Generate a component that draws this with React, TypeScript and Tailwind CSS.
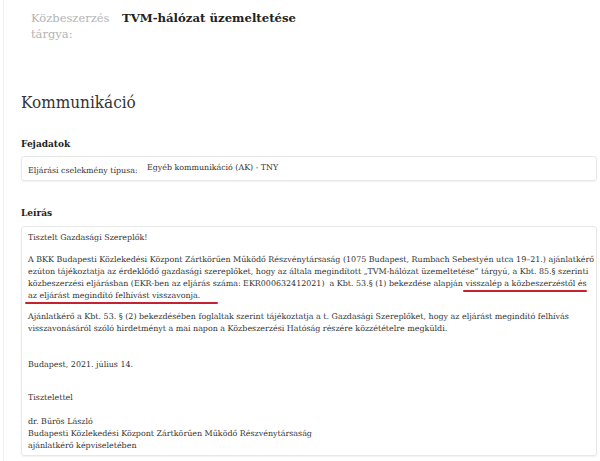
import React from 'react';

const serif = "font-['DejaVu_Serif','Liberation_Serif',serif]";

// hand-drawn red marker line under a phrase
const Mark: React.FC<{ children: React.ReactNode; extra?: string }> = ({ children, extra = 'left-[-2px] right-[0px]' }) => (
  <span className="relative">
    {children}
    <span className={`absolute bottom-[-4px] h-[2.5px] rounded-full bg-[#c42230] ${extra}`} />
  </span>
);

const App: React.FC = () => {
  return (
    <div className={`w-[600px] h-[461px] bg-white overflow-hidden ${serif}`}>
      <div className="ml-[3px] h-full border-l border-[#f1f1f1] pl-[17px] pr-[3px]">
        {/* subject */}
        <div className="flex pt-[10px] pl-[10px]">
          <div className="w-[91px] text-[11.5px] leading-[16px] text-[#b4b4b4]">
            Közbeszerzés
            <br />
            tárgya:
          </div>
          <div className="text-[11.7px] leading-[16px] font-bold text-[#222]">TVM-hálózat üzemeltetése</div>
        </div>

        <h1 className="mt-[48px] text-[17px] leading-[24px] text-[#333] font-['DejaVu_Serif_Condensed','DejaVu_Serif',serif]">
          Kommunikáció
        </h1>

        <h2 className="mt-[24px] text-[9px] leading-[12px] font-bold text-[#222]">Fejadatok</h2>
        <div className="mt-[6px] h-[25px] rounded-[3px] border border-[#e8e8e8] shadow-[0_1px_2px_rgba(0,0,0,0.06)] flex items-center px-[6px] text-[7.9px] text-[#333]">
          <span className="w-[119px] pt-[5px]">Eljárási cselekmény típusa:</span>
          <span className="pb-[1px]">Egyéb kommunikáció (AK) - TNY</span>
        </div>

        <h2 className="mt-[26px] text-[9px] leading-[12px] font-bold text-[#222]">Leírás</h2>
        <div className="mt-[7px] h-[230px] rounded-[3px] border border-[#e8e8e8] shadow-[0_1px_2px_rgba(0,0,0,0.06)] px-[6px] pt-[5px] text-[7.95px] leading-[12px] text-[#333] whitespace-nowrap">
          <p>Tisztelt Gazdasági Szereplők!</p>
          <p className="mt-[10px]">
            A BKK Budapesti Közlekedési Központ Zártkörűen Működő Részvénytársaság (1075 Budapest, Rumbach Sebestyén utca 19–21.) ajánlatkérő
            <br />
            ezúton tájékoztatja az érdeklődő gazdasági szereplőket, hogy az általa megindított „TVM-hálózat üzemeltetése” tárgyú, a Kbt. 85.§ szerinti
            <br />
            közbeszerzési eljárásban (EKR-ben az eljárás száma: EKR000632412021)&nbsp; a Kbt. 53.§ (1) bekezdése alapján{' '}
            <Mark>visszalép a közbeszerzéstől és</Mark>
            <br />
            <Mark extra="left-[-3px] right-[-18px]">az eljárást megindító felhívást visszavonja.</Mark>
          </p>
          <p className="mt-[9px]">
            Ajánlatkérő a Kbt. 53. § (2) bekezdésében foglaltak szerint tájékoztatja a t. Gazdasági Szereplőket, hogy az eljárást megindító felhívás
            <br />
            visszavonásáról szóló hirdetményt a mai napon a Közbeszerzési Hatóság részére közzétételre megküldi.
          </p>
          <p className="mt-[24px]">Budapest, 2021. július 14.</p>
          <p className="mt-[21px]">Tisztelettel</p>
          <p className="mt-[12px]">
            dr. Bűrös László
            <br />
            Budapesti Közlekedési Központ Zártkörűen Működő Részvénytársaság
            <br />
            ajánlatkérő képviseletében
          </p>
        </div>
      </div>
    </div>
  );
};

export default App;
